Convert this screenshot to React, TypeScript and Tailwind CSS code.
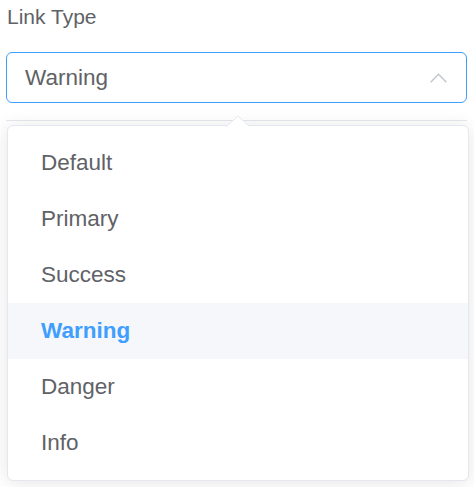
const options = ["Default", "Primary", "Success", "Warning", "Danger", "Info"];

export default function App() {
  const selected = "Warning";

  return (
    <div className="w-[474px] h-[487px] bg-white font-['Liberation_Sans',Arial,sans-serif] overflow-hidden">
      <div className="pl-[7px] pt-[5px] text-[21px] leading-[24px] text-[#606266]">Link Type</div>

      <div className="ml-[6px] mt-[23px] w-[461px] h-[51px] border border-[#409eff] rounded-[6px] flex items-center justify-between pl-[18px] pr-[19px]">
        <span className="text-[22.5px] text-[#606266]">{selected}</span>
        <svg width="17" height="10" viewBox="0 0 17 10" fill="none">
          <path d="M0.7 9.3 L8.5 1.2 L16.3 9.3" stroke="#c0c4cc" strokeWidth="1.3" />
        </svg>
      </div>

      <div className="ml-[6px] mt-[17px] w-[461px] h-px bg-[#e4e7ed]" />

      <div className="relative ml-[7px] mt-[4px] w-[462px] border border-[#e4e7ed] rounded-[6px] bg-white shadow-[0_2px_19px_rgba(0,0,0,0.1)] py-[9px]">
        <svg
          className="absolute -top-[11px] left-[218px]"
          width="24"
          height="12"
          viewBox="0 0 24 12"
          fill="none"
        >
          <path d="M0 12 L12 0.8 L24 12 Z" fill="#ffffff" />
          <path d="M0.5 11.5 L12 0.8 L23.5 11.5" stroke="#e4e7ed" strokeWidth="1" />
        </svg>
        <ul>
          {options.map((o) => (
            <li
              key={o}
              className={`h-[56px] flex items-center pl-[33px] text-[22.5px] ${
                o === selected ? "bg-[#f5f7fa] text-[#409eff] font-bold" : "text-[#606266]"
              }`}
            >
              {o}
            </li>
          ))}
        </ul>
      </div>
    </div>
  );
}
